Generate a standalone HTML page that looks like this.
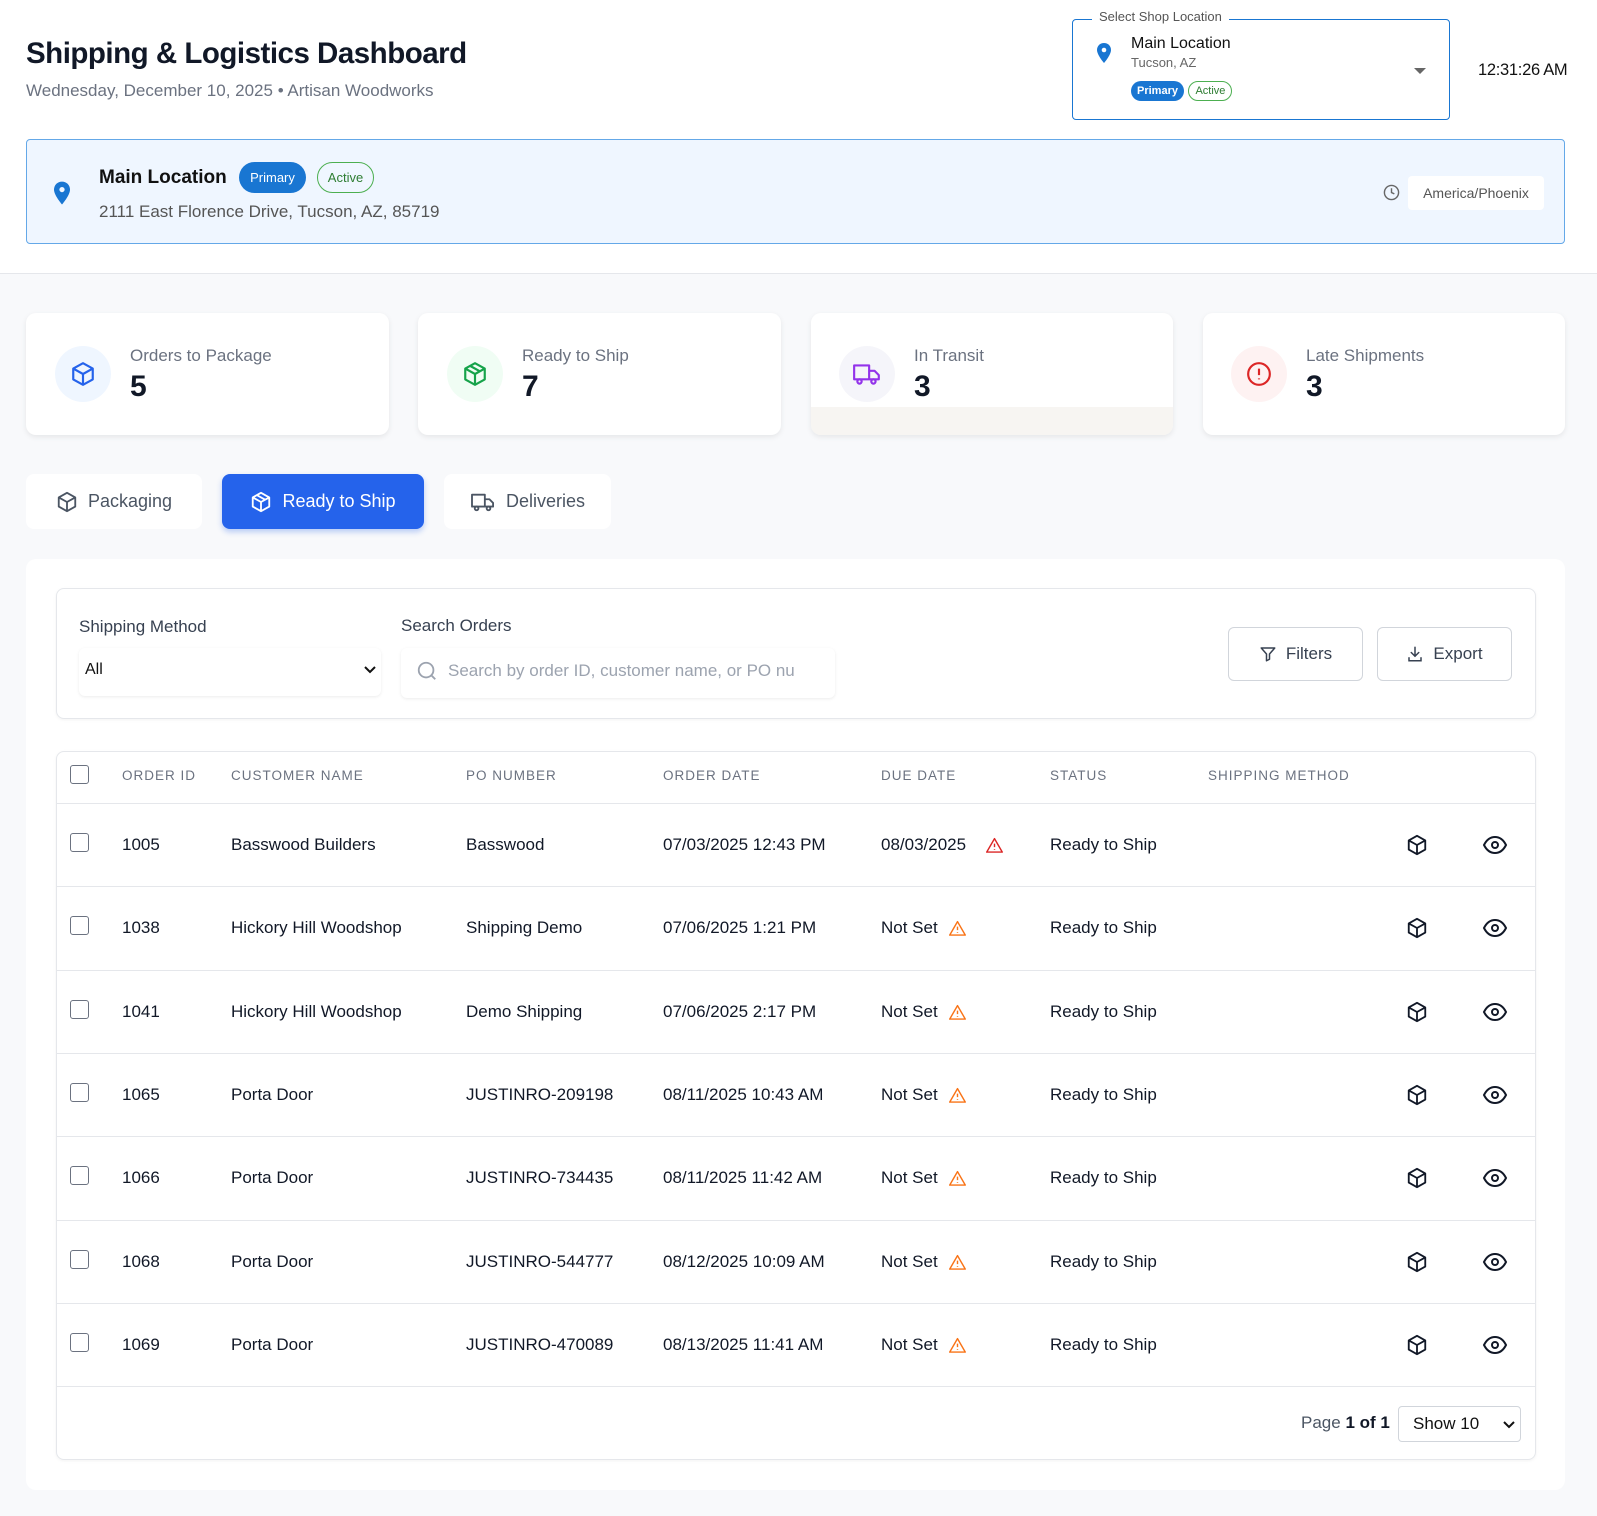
<!DOCTYPE html>
<html><head><meta charset="utf-8"><style>
*{box-sizing:border-box;margin:0;padding:0}
body{width:1597px;height:1516px;background:#f8f9fb;font-family:"Liberation Sans",sans-serif;color:#111827;position:relative;overflow:hidden}
.a{position:absolute}
.hdr{left:0;top:0;width:1597px;height:274px;background:#fff;border-bottom:1px solid #e5e7eb}
.card{background:#fff;border-radius:10px;box-shadow:0 2px 6px rgba(0,0,0,.08)}
.ic{width:56px;height:56px;border-radius:50%;display:flex;align-items:center;justify-content:center}
.lbl{font-size:17px;color:#6b7280}
.num{font-size:30px;font-weight:bold;color:#111827}
.tab{height:55px;border-radius:8px;background:#fff;display:flex;align-items:center;justify-content:center;gap:10px;font-size:18px;color:#4b5563}
.th{font-size:13.5px;color:#6b7280;letter-spacing:1px;top:768px}
.row{left:56px;width:1480px;height:83.5px;border-top:1px solid #e5e7eb}
.cell{position:absolute;top:31px;font-size:17px;color:#111827}
.cb{position:absolute;left:14px;top:29px;width:19px;height:19px;border:1.5px solid #6b7280;border-radius:3px}
.pill{display:inline-block;border-radius:12px;font-size:11px;padding:3px 6px}
</style></head><body>
<div class="a hdr"></div>
<div class="a" style="left:26px;top:37px;font-size:29.5px;font-weight:bold;letter-spacing:-.5px;color:#111827">Shipping &amp; Logistics Dashboard</div>
<div class="a" style="left:26px;top:81px;font-size:17px;color:#6b7280">Wednesday, December 10, 2025 • Artisan Woodworks</div>

<div class="a" style="left:1072px;top:19px;width:378px;height:101px;border:1.5px solid #1976d2;border-radius:4px"></div>
<div class="a" style="left:1092px;top:9px;background:#fff;padding:0 7px;font-size:13px;color:#555">Select Shop Location</div>
<svg class="a" style="left:1097px;top:43px" width="14" height="20" viewBox="0 0 14 20"><path d="M7 0C3 0 0 3 0 7c0 5 7 13 7 13s7-8 7-13c0-4-3-7-7-7z" fill="#1976d2"/><circle cx="7" cy="7" r="2.3" fill="#fff"/></svg>
<div class="a" style="left:1131px;top:35px;font-size:16px;color:#111">Main Location</div>
<div class="a" style="left:1131px;top:55px;font-size:13px;color:#666">Tucson, AZ</div>
<div class="a" style="left:1131px;top:81px"><span class="pill" style="background:#1976d2;color:#fff;font-weight:bold;padding:4px 6px">Primary</span> <span class="pill" style="border:1px solid #4caf50;color:#2e7d32;padding:3px 6px">Active</span></div>
<div class="a" style="left:1414px;top:68px;width:0;height:0;border-left:6px solid transparent;border-right:6px solid transparent;border-top:6px solid #666"></div>
<div class="a" style="left:1478px;top:61px;font-size:16.5px;color:#111;letter-spacing:-.3px">12:31:26 AM</div>

<div class="a" style="left:26px;top:139px;width:1539px;height:105px;background:#eff6ff;border:1.5px solid #64a8e8;border-radius:4px"></div>
<svg class="a" style="left:54px;top:181px" width="16" height="24" viewBox="0 0 14 20"><path d="M7 0C3 0 0 3 0 7c0 5 7 13 7 13s7-8 7-13c0-4-3-7-7-7z" fill="#1976d2"/><circle cx="7" cy="7" r="2.3" fill="#eff6ff"/></svg>
<div class="a" style="left:99px;top:167px;font-size:19px;font-weight:bold;color:#111">Main Location</div>
<div class="a" style="left:239px;top:162px;width:67px;height:31px;border-radius:16px;background:#1976d2;color:#fff;font-size:13px;display:flex;align-items:center;justify-content:center">Primary</div>
<div class="a" style="left:317px;top:162px;width:57px;height:31px;border-radius:16px;border:1px solid #4caf50;color:#2e7d32;font-size:13px;display:flex;align-items:center;justify-content:center">Active</div>
<div class="a" style="left:99px;top:202px;font-size:17px;color:#555">2111 East Florence Drive, Tucson, AZ, 85719</div>
<svg class="a" style="left:1383px;top:184px" width="17" height="17" viewBox="0 0 24 24" fill="none" stroke="#666" stroke-width="2"><circle cx="12" cy="12" r="10"/><path d="M12 6v6l4 2"/></svg>
<div class="a" style="left:1408px;top:176px;width:136px;height:34px;background:#fff;border-radius:4px;font-size:14px;color:#555;display:flex;align-items:center;justify-content:center">America/Phoenix</div>

<div class="a card" style="left:26px;top:313px;width:363px;height:122px"></div>
<div class="a ic" style="left:55px;top:346px;background:#eff6ff"><svg width="26" height="26" viewBox="0 0 24 24" fill="none" stroke="#2563eb" stroke-width="2" stroke-linejoin="round"><path d="M12 2l9 5v10l-9 5-9-5V7z"/><path d="M3 7l9 5 9-5M12 12v10"/></svg></div>
<div class="a lbl" style="left:130px;top:346px">Orders to Package</div>
<div class="a num" style="left:130px;top:370px">5</div>

<div class="a card" style="left:418px;top:313px;width:363px;height:122px"></div>
<div class="a ic" style="left:447px;top:346px;background:#f0fdf4"><svg width="26" height="26" viewBox="0 0 24 24" fill="none" stroke="#16a34a" stroke-width="2" stroke-linejoin="round"><path d="M12 2l9 5v10l-9 5-9-5V7z"/><path d="M3 7l9 5 9-5M12 12v10M7.5 4.5l9 5"/></svg></div>
<div class="a lbl" style="left:522px;top:346px">Ready to Ship</div>
<div class="a num" style="left:522px;top:370px">7</div>

<div class="a card" style="left:811px;top:313px;width:362px;height:122px;background:linear-gradient(#fff 0,#fff 77%,#f7f5f2 77%)"></div>
<div class="a ic" style="left:839px;top:346px;background:#f5f5fa"><svg width="30" height="26" viewBox="0 0 28 24" fill="none" stroke="#9333ea" stroke-width="2" stroke-linejoin="round"><path d="M2 4h14v13H2zM16 9h5l4 4v4h-9z"/><circle cx="7" cy="19" r="2" fill="#f5f5fa"/><circle cx="20" cy="19" r="2" fill="#f5f5fa"/></svg></div>
<div class="a lbl" style="left:914px;top:346px">In Transit</div>
<div class="a num" style="left:914px;top:370px">3</div>

<div class="a card" style="left:1203px;top:313px;width:362px;height:122px"></div>
<div class="a ic" style="left:1231px;top:346px;background:#fef2f2"><svg width="26" height="26" viewBox="0 0 24 24" fill="none" stroke="#dc2626" stroke-width="2"><circle cx="12" cy="12" r="10"/><path d="M12 7v6M12 16v1"/></svg></div>
<div class="a lbl" style="left:1306px;top:346px">Late Shipments</div>
<div class="a num" style="left:1306px;top:370px">3</div>

<div class="a tab" style="left:26px;top:474px;width:176px"><svg width="22" height="22" viewBox="0 0 24 24" fill="none" stroke="#4b5563" stroke-width="2" stroke-linejoin="round"><path d="M12 2l9 5v10l-9 5-9-5V7z"/><path d="M3 7l9 5 9-5M12 12v10"/></svg>Packaging</div>
<div class="a tab" style="left:222px;top:474px;width:202px;background:#2563eb;color:#fff;box-shadow:0 3px 6px rgba(37,99,235,.3)"><svg width="22" height="22" viewBox="0 0 24 24" fill="none" stroke="#fff" stroke-width="2" stroke-linejoin="round"><path d="M12 2l9 5v10l-9 5-9-5V7z"/><path d="M3 7l9 5 9-5M12 12v10M7.5 4.5l9 5"/></svg>Ready to Ship</div>
<div class="a tab" style="left:444px;top:474px;width:167px"><svg width="26" height="22" viewBox="0 0 28 24" fill="none" stroke="#4b5563" stroke-width="2" stroke-linejoin="round"><path d="M2 4h14v13H2zM16 9h5l4 4v4h-9z"/><circle cx="7" cy="19" r="2" fill="#fff"/><circle cx="20" cy="19" r="2" fill="#fff"/></svg>Deliveries</div>

<div class="a" style="left:26px;top:559px;width:1539px;height:931px;background:#fff;border-radius:10px"></div>
<div class="a" style="left:56px;top:588px;width:1480px;height:131px;border:1px solid #e5e7eb;border-radius:8px;box-shadow:0 1px 3px rgba(0,0,0,.05)"></div>
<div class="a" style="left:79px;top:617px;font-size:17px;color:#374151">Shipping Method</div>
<div class="a" style="left:79px;top:648px;width:302px;height:48px;border-radius:6px;box-shadow:0 1px 3px rgba(0,0,0,.08);background:#fff"></div>
<div class="a" style="left:85px;top:661px;font-size:16px;color:#111">All</div>
<svg class="a" style="left:363px;top:665px" width="14" height="10" viewBox="0 0 14 10"><path d="M2 2l5 5 5-5" stroke="#111" stroke-width="2" fill="none"/></svg>
<div class="a" style="left:401px;top:616px;font-size:17px;color:#374151">Search Orders</div>
<div class="a" style="left:401px;top:648px;width:434px;height:50px;border-radius:6px;box-shadow:0 1px 3px rgba(0,0,0,.08);background:#fff"></div>
<svg class="a" style="left:416px;top:660px" width="22" height="22" viewBox="0 0 24 24" fill="none" stroke="#9ca3af" stroke-width="2"><circle cx="11" cy="11" r="8"/><path d="M17 17l4 4"/></svg>
<div class="a" style="left:448px;top:661px;font-size:17px;color:#9ca3af">Search by order ID, customer name, or PO nu</div>
<div class="a" style="left:1228px;top:627px;width:135px;height:54px;border:1px solid #d1d5db;border-radius:6px;display:flex;align-items:center;justify-content:center;gap:9px;font-size:17px;color:#374151"><svg width="18" height="18" viewBox="0 0 24 24" fill="none" stroke="#374151" stroke-width="2" stroke-linejoin="round"><path d="M3 4h18l-7 8v7l-4 2v-9z"/></svg>Filters</div>
<div class="a" style="left:1377px;top:627px;width:135px;height:54px;border:1px solid #d1d5db;border-radius:6px;display:flex;align-items:center;justify-content:center;gap:9px;font-size:17px;color:#374151"><svg width="18" height="18" viewBox="0 0 24 24" fill="none" stroke="#374151" stroke-width="2" stroke-linecap="round"><path d="M12 3v12M7 10l5 5 5-5M4 17v4h16v-4"/></svg>Export</div>

<div class="a" style="left:56px;top:751px;width:1480px;height:709px;border:1px solid #e5e7eb;border-radius:8px;box-shadow:0 1px 3px rgba(0,0,0,.05)"></div>
<div class="a" style="left:70px;top:765px;width:19px;height:19px;border:1.5px solid #6b7280;border-radius:3px"></div>
<div class="a th" style="left:122px">ORDER ID</div>
<div class="a th" style="left:231px">CUSTOMER NAME</div>
<div class="a th" style="left:466px">PO NUMBER</div>
<div class="a th" style="left:663px">ORDER DATE</div>
<div class="a th" style="left:881px">DUE DATE</div>
<div class="a th" style="left:1050px">STATUS</div>
<div class="a th" style="left:1208px">SHIPPING METHOD</div>

<div id="rows"></div>
<div class="a" style="left:56px;top:1386px;width:1480px;border-top:1px solid #e5e7eb"></div>
<div class="a" style="left:1301px;top:1413px;font-size:17px;color:#4b5563">Page <b style="color:#111827">1 of 1</b></div>
<div class="a" style="left:1398px;top:1406px;width:123px;height:36px;border:1px solid #d1d5db;border-radius:4px"></div>
<div class="a" style="left:1413px;top:1414px;font-size:17px;color:#111">Show 10</div>
<svg class="a" style="left:1502px;top:1420px" width="14" height="10" viewBox="0 0 14 10"><path d="M2 2l5 5 5-5" stroke="#111" stroke-width="2" fill="none"/></svg>

<script>
var d=[["1005","Basswood Builders","Basswood","07/03/2025 12:43 PM","08/03/2025","#dc2626"],
["1038","Hickory Hill Woodshop","Shipping Demo","07/06/2025 1:21 PM","Not Set","#f97316"],
["1041","Hickory Hill Woodshop","Demo Shipping","07/06/2025 2:17 PM","Not Set","#f97316"],
["1065","Porta Door","JUSTINRO-209198","08/11/2025 10:43 AM","Not Set","#f97316"],
["1066","Porta Door","JUSTINRO-734435","08/11/2025 11:42 AM","Not Set","#f97316"],
["1068","Porta Door","JUSTINRO-544777","08/12/2025 10:09 AM","Not Set","#f97316"],
["1069","Porta Door","JUSTINRO-470089","08/13/2025 11:41 AM","Not Set","#f97316"]];
var h="";
d.forEach(function(r,i){var t=803+i*83.3;
var wx=r[4]=="Not Set"?949:986;
h+='<div class="a row" style="top:'+t+'px"><div class="cb"></div>'+
'<div class="cell" style="left:66px">'+r[0]+'</div><div class="cell" style="left:175px">'+r[1]+'</div><div class="cell" style="left:410px">'+r[2]+'</div><div class="cell" style="left:607px">'+r[3]+'</div><div class="cell" style="left:825px">'+r[4]+'</div>'+
'<svg style="position:absolute;left:'+(wx-56)+'px;top:33px" width="17" height="16" viewBox="0 0 24 22" fill="none" stroke="'+r[5]+'" stroke-width="2" stroke-linejoin="round"><path d="M12 2L1 21h22z"/><path d="M12 9v5M12 17v1"/></svg>'+
'<div class="cell" style="left:994px">Ready to Ship</div>'+
'<svg style="position:absolute;left:1350px;top:30px" width="22" height="22" viewBox="0 0 24 24" fill="none" stroke="#111827" stroke-width="2" stroke-linejoin="round"><path d="M12 2l9 5v10l-9 5-9-5V7z"/><path d="M3 7l9 5 9-5M12 12v10"/></svg>'+
'<svg style="position:absolute;left:1426px;top:30px" width="26" height="22" viewBox="0 0 26 22" fill="none" stroke="#111827" stroke-width="2"><path d="M2 11C5 5 9 3 13 3s8 2 11 8c-3 6-7 8-11 8S5 17 2 11z"/><circle cx="13" cy="11" r="3"/></svg></div>';});
document.getElementById("rows").innerHTML=h;
</script>
</body></html>
